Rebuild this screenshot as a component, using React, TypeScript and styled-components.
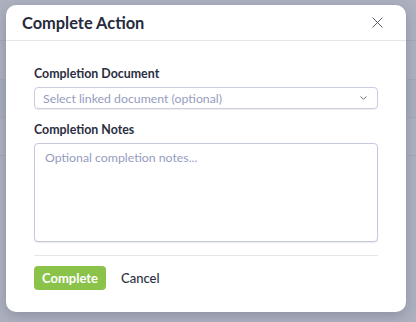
import React from 'react';
import styled, { createGlobalStyle } from 'styled-components';

const GlobalStyle = createGlobalStyle`
  html, body {
    margin: 0;
    padding: 0;
    width: 416px;
    height: 322px;
    overflow: hidden;
    font-family: 'Lato', 'Open Sans', sans-serif;
  }
`;

function App() {
  return (
    <>
      <GlobalStyle />
      <Page>
        <BackdropRows>
          <BackRow $h={40} />
          <BackRow $h={38} />
          <BackRow $h={37} $dark />
          <BackRow $h={37} />
        </BackdropRows>
        <Overlay>
          <Modal>
            <Header>
              <Title>Complete Action</Title>
              <CloseButton aria-label="Close">
                <svg width="11" height="11" viewBox="0 0 11 11">
                  <path
                    d="M0.8 0.8 L10.2 10.2 M10.2 0.8 L0.8 10.2"
                    stroke="#5a5d6e"
                    strokeWidth="1"
                    strokeLinecap="round"
                  />
                </svg>
              </CloseButton>
            </Header>
            <Body>
              <Field>
                <Label>Completion Document</Label>
                <SelectBox>
                  <Placeholder>Select linked document (optional)</Placeholder>
                  <svg width="7" height="4" viewBox="0 0 7 4">
                    <path
                      d="M0.8 0.8 L3.5 3.2 L6.2 0.8"
                      fill="none"
                      stroke="#6a6e82"
                      strokeWidth="1"
                      strokeLinecap="round"
                      strokeLinejoin="round"
                    />
                  </svg>
                </SelectBox>
              </Field>
              <Field>
                <Label>Completion Notes</Label>
                <Notes placeholder="Optional completion notes..." />
              </Field>
              <Footer>
                <PrimaryButton>Complete</PrimaryButton>
                <LinkButton>Cancel</LinkButton>
              </Footer>
            </Body>
          </Modal>
        </Overlay>
      </Page>
    </>
  );
}

export default App;

const Page = styled.div`
  position: relative;
  width: 416px;
  height: 322px;
  background: #f4f5f8;
  overflow: hidden;
`;

const BackdropRows = styled.div`
  display: flex;
  flex-direction: column;
`;

const BackRow = styled.div<{ $h: number; $dark?: boolean }>`
  height: ${p => p.$h}px;
  border-bottom: 1px solid #dfe1e8;
  background: ${p => (p.$dark ? '#eceef3' : '#f4f5f8')};
`;

const Overlay = styled.div`
  position: absolute;
  inset: 0;
  background: rgba(120, 126, 150, 0.57);
  padding: 5px 10px 0 6px;
`;

const Modal = styled.div`
  width: 400px;
  height: 307px;
  background: #ffffff;
  border-radius: 10px;
  box-shadow: 0 4px 14px rgba(40, 44, 70, 0.25);
  display: flex;
  flex-direction: column;
`;

const Header = styled.div`
  height: 36px;
  box-sizing: border-box;
  display: flex;
  align-items: center;
  justify-content: space-between;
  padding: 0 23px 0 16px;
  border-bottom: 1px solid #e4e6ec;
`;

const Title = styled.h2`
  margin: 0;
  font-size: 16.4px;
  font-weight: 700;
  color: #262a3b;
`;

const CloseButton = styled.button`
  border: none;
  background: transparent;
  padding: 0;
  display: flex;
  cursor: pointer;
`;

const Body = styled.div`
  display: flex;
  flex-direction: column;
  padding: 24px 28px 0 28px;
  gap: 12px;
`;

const Field = styled.div`
  display: flex;
  flex-direction: column;
  gap: 4px;
`;

const Label = styled.label`
  font-size: 12.4px;
  font-weight: 700;
  color: #2a2e40;
  line-height: 18px;
`;

const SelectBox = styled.div`
  height: 22px;
  box-sizing: border-box;
  border: 1px solid #c9cde0;
  border-radius: 4px;
  box-shadow: 0 1px 1px rgba(40, 44, 70, 0.08);
  display: flex;
  align-items: center;
  justify-content: space-between;
  padding: 0 10px 0 8px;
`;

const Placeholder = styled.span`
  font-size: 12.3px;
  color: #959cc0;
`;

const Notes = styled.textarea`
  height: 99px;
  box-sizing: border-box;
  border: 1px solid #c5c9dc;
  border-radius: 4px;
  box-shadow: 0 1px 1px rgba(40, 44, 70, 0.1);
  padding: 6px 10px;
  resize: none;
  font-family: inherit;
  font-size: 12.3px;
  outline: none;

  &::placeholder {
    color: #959cc0;
  }
`;

const Footer = styled.div`
  margin-top: 1px;
  border-top: 1px solid #e4e6ec;
  padding-top: 10px;
  display: flex;
  align-items: center;
  gap: 15px;
`;

const PrimaryButton = styled.button`
  height: 24px;
  padding: 0 8px;
  border: none;
  border-radius: 4px;
  background: #8bc34a;
  color: #ffffff;
  font-family: inherit;
  font-size: 13px;
  font-weight: 700;
  cursor: pointer;
`;

const LinkButton = styled.button`
  border: none;
  background: transparent;
  padding: 0;
  color: #2a2e40;
  font-family: inherit;
  font-size: 13px;
  font-weight: 500;
  cursor: pointer;
`;
